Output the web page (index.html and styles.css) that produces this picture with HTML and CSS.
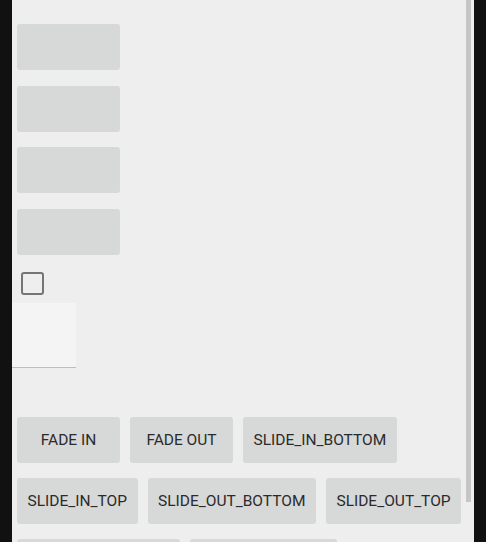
FILE: index.html
```html
<!DOCTYPE html>
<html lang="en">
<head>
  <meta charset="UTF-8" />
  <meta name="viewport" content="width=device-width, initial-scale=1.0"/>
  <title>Animations</title>
  <link rel="stylesheet" href="styles.css">
</head>
<body>
  <div class="screen">
    <div class="content">
      <div class="blank-btns">
        <button class="btn blank"></button>
        <button class="btn blank"></button>
        <button class="btn blank"></button>
        <button class="btn blank"></button>
      </div>
      <div class="check-row">
        <span class="checkbox"></span>
      </div>
      <div class="edit-box"></div>
      <div class="anim-btns">
        <button class="btn">FADE IN</button>
        <button class="btn">FADE OUT</button>
        <button class="btn">SLIDE_IN_BOTTOM</button>
        <button class="btn">SLIDE_IN_TOP</button>
        <button class="btn">SLIDE_OUT_BOTTOM</button>
        <button class="btn">SLIDE_OUT_TOP</button>
        <button class="btn wide"></button>
        <button class="btn mid"></button>
      </div>
    </div>
    <div class="scrollbar"></div>
  </div>
</body>
</html>
```

FILE: styles.css
```css
* {
  margin: 0;
  padding: 0;
  box-sizing: border-box;
}
html, body {
  height: 100%;
  overflow: hidden;
}
body {
  background: #111111;
  font-family: Roboto, 'Noto Sans', sans-serif;
  padding: 0 12px;
}
.screen {
  position: relative;
  height: 100%;
  background: #eeeeee;
  overflow: hidden;
}
.content {
  padding: 24px 0 0 5px;
}
.btn {
  display: inline-block;
  min-width: 103px;
  height: 46px;
  padding: 0 10.5px;
  border: none;
  border-radius: 3px;
  background: #d7d8d8;
  color: #2b2b2b;
  font-family: inherit;
  font-size: 15.5px;
  font-weight: 400;
}
.btn.wide {
  width: 163px;
}
.btn.mid {
  width: 147px;
}
.blank-btns {
  display: flex;
  flex-direction: column;
  align-items: flex-start;
  gap: 15.67px;
}
.check-row {
  padding: 17px 0 0 4px;
  height: 48px;
}
.checkbox {
  display: block;
  width: 23px;
  height: 23px;
  border: 2px solid #757575;
  border-radius: 3px;
}
.edit-box {
  margin-left: -5px;
  width: 64px;
  height: 65px;
  background: #f4f4f4;
  border-bottom: 1px solid #bdbdbd;
}
.anim-btns {
  display: flex;
  flex-wrap: wrap;
  gap: 15px 10px;
  margin-top: 49px;
  width: 450px;
}
.scrollbar {
  position: absolute;
  top: 0;
  right: 3px;
  width: 5px;
  height: 502px;
  background: #c6c6c6;
}
```
